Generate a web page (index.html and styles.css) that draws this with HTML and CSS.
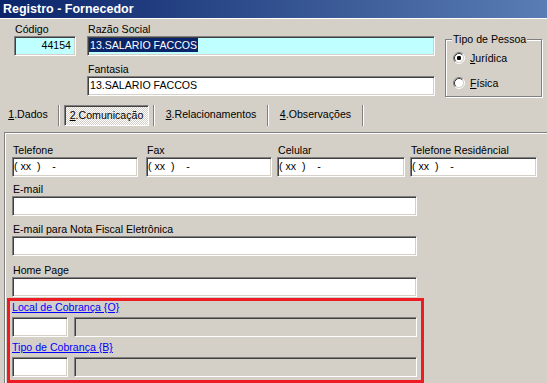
FILE: index.html
```html
<!DOCTYPE html>
<html lang="pt-BR">
<head>
<meta charset="utf-8">
<title>Registro - Fornecedor</title>
<link rel="stylesheet" href="styles.css">
</head>
<body>
<div class="window">
  <div class="titlebar">Registro - Fornecedor</div>
  <div class="client">
    <div class="header">
      <div class="col col-codigo">
        <div class="label">Código</div>
        <div class="field field-cyan field-right">44154</div>
      </div>
      <div class="col col-razao">
        <div class="label">Razão Social</div>
        <div class="field field-cyan"><span class="sel">13.SALARIO FACCOS</span></div>
        <div class="label label-fantasia">Fantasia</div>
        <div class="field">13.SALARIO FACCOS</div>
      </div>
      <div class="groupbox">
        <div class="legend">Tipo de Pessoa</div>
        <div class="radio radio-first">
          <svg class="radio-icon" width="12" height="12" viewBox="0 0 12 12">
            <circle cx="6" cy="6" r="4.5" fill="#fff"/>
            <path d="M2.11 9.89 A5.5 5.5 0 0 1 9.89 2.11" fill="none" stroke="#808080" stroke-width="1"/>
            <path d="M9.89 2.11 A5.5 5.5 0 0 1 2.11 9.89" fill="none" stroke="#ffffff" stroke-width="1"/>
            <path d="M2.82 9.18 A4.5 4.5 0 0 1 9.18 2.82" fill="none" stroke="#404040" stroke-width="1"/>
            <path d="M9.18 2.82 A4.5 4.5 0 0 1 2.82 9.18" fill="none" stroke="#d4d0c8" stroke-width="1"/>
            <rect x="4" y="4" width="4" height="4" rx="1.2" fill="#000"/>
          </svg>
          <span><u>J</u>urídica</span>
        </div>
        <div class="radio radio-second">
          <svg class="radio-icon" width="12" height="12" viewBox="0 0 12 12">
            <circle cx="6" cy="6" r="4.5" fill="#fff"/>
            <path d="M2.11 9.89 A5.5 5.5 0 0 1 9.89 2.11" fill="none" stroke="#808080" stroke-width="1"/>
            <path d="M9.89 2.11 A5.5 5.5 0 0 1 2.11 9.89" fill="none" stroke="#ffffff" stroke-width="1"/>
            <path d="M2.82 9.18 A4.5 4.5 0 0 1 9.18 2.82" fill="none" stroke="#404040" stroke-width="1"/>
            <path d="M9.18 2.82 A4.5 4.5 0 0 1 2.82 9.18" fill="none" stroke="#d4d0c8" stroke-width="1"/>
          </svg>
          <span><u>F</u>ísica</span>
        </div>
      </div>
    </div>

    <div class="tabs">
      <div class="tab tab-1"><u>1</u>.Dados</div>
      <div class="tab-sep"></div>
      <div class="tab tab-2 tab-active"><u>2</u>.Comunicação</div>
      <div class="tab-sep"></div>
      <div class="tab tab-3"><u>3</u>.Relacionamentos</div>
      <div class="tab-sep"></div>
      <div class="tab tab-4"><u>4</u>.Observações</div>
      <div class="tab-sep"></div>
    </div>

    <div class="page">
      <div class="phones">
        <div class="pcol pcol-tel">
          <div class="label">Telefone</div>
          <div class="field mask">( xx  )    -</div>
        </div>
        <div class="pcol pcol-fax">
          <div class="label">Fax</div>
          <div class="field mask">( xx  )    -</div>
        </div>
        <div class="pcol pcol-cel">
          <div class="label">Celular</div>
          <div class="field mask">( xx  )    -</div>
        </div>
        <div class="pcol pcol-res">
          <div class="label">Telefone Residêncial</div>
          <div class="field mask">( xx  )    -</div>
        </div>
      </div>

      <div class="block block-email">
        <div class="label">E-mail</div>
        <div class="field field-wide"></div>
      </div>
      <div class="block block-nfe">
        <div class="label">E-mail para Nota Fiscal Eletrônica</div>
        <div class="field field-wide"></div>
      </div>
      <div class="block block-home">
        <div class="label">Home Page</div>
        <div class="field field-wide"></div>
      </div>

      <div class="highlight">
        <a class="link link-first" href="#">Local de Cobrança {O}</a>
        <div class="lookup">
          <div class="field field-code"></div>
          <div class="field field-desc"></div>
        </div>
        <a class="link link-second" href="#">Tipo de Cobrança {B}</a>
        <div class="lookup">
          <div class="field field-code"></div>
          <div class="field field-desc"></div>
        </div>
      </div>
    </div>
  </div>
</div>
</body>
</html>
```

FILE: styles.css
```css
html, body {
  margin: 0;
  padding: 0;
  background: #d4d0c8;
  overflow: hidden;
}

body {
  font-family: "Liberation Sans", Arial, sans-serif;
  font-size: 10.6px;
  color: #000;
}

.window {
  width: 547px;
  height: 383px;
  display: flex;
  flex-direction: column;
  overflow: hidden;
}

.titlebar {
  height: 18px;
  line-height: 18px;
  padding-left: 3px;
  color: #fff;
  font-weight: bold;
  font-size: 12.5px;
  background: linear-gradient(to right, #0a246a, #5a7db4);
  flex: none;
}

.client {
  border-top: 1px solid #fff;
  flex: 1;
  display: flex;
  flex-direction: column;
}

/* header */
.header {
  display: flex;
  align-items: flex-start;
  padding: 3px 0 0 14px;
}

.label {
  line-height: 14px;
  padding-left: 1px;
  white-space: nowrap;
}

.col-codigo { width: 62px; }
.col-razao { width: 348px; margin-left: 11px; }
.label-fantasia { margin-top: 6px; }

.field {
  box-sizing: border-box;
  height: 20px;
  background: #fff;
  border-top: 1px solid #808080;
  border-left: 1px solid #808080;
  border-bottom: 1px solid #fff;
  border-right: 1px solid #fff;
  box-shadow: inset 1px 1px 0 #404040, inset -1px -1px 0 #d4d0c8;
  padding: 1px 1px 0 2px;
  line-height: 14px;
  white-space: pre;
  overflow: hidden;
}

.field-cyan { background: #c0ffff; }
.field-right { text-align: right; padding-right: 4px; }

.sel {
  display: inline-block;
  background: #0a246a;
  color: #fff;
  margin-left: -1px;
  padding: 0 1px;
  height: 14px;
}

/* group box */
.groupbox {
  position: relative;
  box-sizing: border-box;
  width: 97px;
  height: 58px;
  margin: 17px 0 0 10px;
  border: 1px solid #808080;
  box-shadow: inset 1px 1px 0 #fff, 1px 1px 0 #fff;
}

.legend {
  position: absolute;
  left: 6px;
  top: -7px;
  padding: 0 1px;
  line-height: 13px;
  background: #d4d0c8;
  white-space: nowrap;
}

.radio {
  display: flex;
  align-items: center;
  height: 12px;
  line-height: 12px;
  margin-left: 7px;
}
.radio-first { margin-top: 12px; }
.radio-second { margin-top: 13px; }
.radio-icon { flex: none; margin-right: 5px; }

/* tabs */
.tabs {
  display: flex;
  height: 21px;
  margin-top: 8px;
  padding-left: 2px;
  flex: none;
}

.tab {
  box-sizing: border-box;
  height: 21px;
  line-height: 19px;
  text-align: center;
  white-space: nowrap;
}
.tab-1 { width: 52px; }
.tab-2 { width: 85px; }
.tab-3 { width: 104px; }
.tab-4 { width: 85px; }

.tab-active {
  border-top: 1px solid #808080;
  border-left: 1px solid #808080;
  border-bottom: 1px solid #fff;
  border-right: 1px solid #fff;
  box-shadow: inset 1px 1px 0 #404040;
  background: repeating-conic-gradient(#ffffff 0 25%, #d4d0c8 0 50%) 0 0 / 2px 2px;
  line-height: 17px;
  padding-top: 1px;
}

.tab-sep {
  box-sizing: border-box;
  width: 2px;
  height: 21px;
  margin: 0 4px;
  border-left: 1px solid #808080;
  border-right: 1px solid #fff;
}

/* page */
.page {
  flex: 1;
  margin: 6px 0 0 4px;
  border-top: 1px solid #808080;
  border-left: 1px solid #808080;
  box-shadow: inset 1px 1px 0 #fff;
  padding: 10px 0 0 7px;
}

.phones { display: flex; }
.pcol-tel { width: 126px; }
.pcol-fax { width: 126px; margin-left: 8px; }
.pcol-cel { width: 128px; margin-left: 5px; }
.pcol-res { width: 127px; margin-left: 5px; }

.mask { padding-left: 1px; }

.field-wide { width: 405px; }
.block-email { margin-top: 5px; }
.block-nfe { margin-top: 6px; }
.block-home { margin-top: 7px; }

.highlight {
  box-sizing: border-box;
  width: 417px;
  margin: 1px 0 0 -5px;
  border: 3px solid #ed1c24;
  padding: 0 0 3px 2px;
}

.link {
  display: block;
  width: max-content;
  color: #0000ff;
  text-decoration: underline;
  line-height: 12px;
}
.link-first { margin-bottom: 4px; }
.link-second { margin: 4px 0 4px; }

.lookup { display: flex; }
.field-code { width: 56px; }
.field-desc { width: 343px; margin-left: 6px; background: #d4d0c8; }
```
